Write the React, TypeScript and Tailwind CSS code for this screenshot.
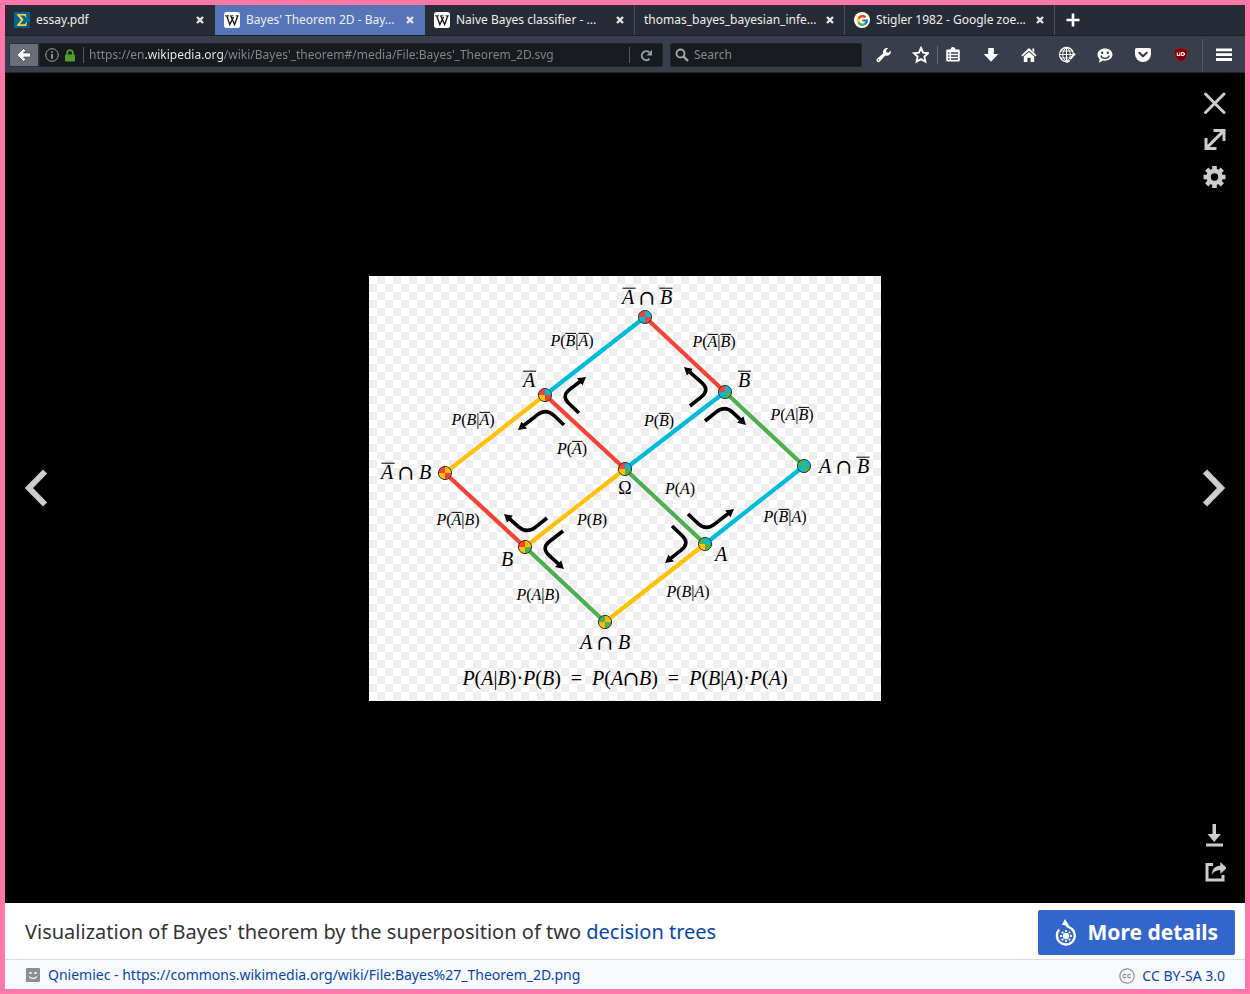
import React from 'react';
import { FcGoogle } from 'react-icons/fc';

const RED = '#f44336';
const CYAN = '#00bcd9';
const YELLOW = '#ffc107';
const GREEN = '#4caf50';

type Point = [number, number];

const points: Record<string, Point> = {
  nAnB: [276, 41],
  nA: [176, 119],
  nB: [356, 116],
  nAB: [76, 197],
  omega: [256, 193],
  AnB: [435, 190],
  B: [156, 271],
  A: [336, 268],
  AB: [236, 346],
};

const edges: [string, string, string][] = [
  ['nA', 'nAnB', CYAN],
  ['nB', 'nAnB', RED],
  ['nA', 'nAB', YELLOW],
  ['nA', 'omega', RED],
  ['nB', 'omega', CYAN],
  ['nB', 'AnB', GREEN],
  ['B', 'nAB', RED],
  ['B', 'omega', YELLOW],
  ['A', 'omega', GREEN],
  ['A', 'AnB', CYAN],
  ['B', 'AB', GREEN],
  ['A', 'AB', YELLOW],
];

// quarter colours: top left, top right, bottom left, bottom right
const quarters: Record<string, string[]> = {
  nAnB: [RED, CYAN, CYAN, RED],
  nA: [RED, CYAN, YELLOW, RED],
  nB: [RED, CYAN, CYAN, GREEN],
  nAB: [RED, YELLOW, YELLOW, RED],
  omega: [RED, CYAN, YELLOW, GREEN],
  AnB: [GREEN, CYAN, CYAN, GREEN],
  B: [RED, YELLOW, YELLOW, GREEN],
  A: [GREEN, CYAN, YELLOW, GREEN],
  AB: [GREEN, YELLOW, YELLOW, GREEN],
};

// start, corner, tip
const turns: [Point, Point, Point][] = [
  [[210, 137], [192, 120], [217, 101]],
  [[195, 149], [177, 132], [149, 154]],
  [[321, 130], [341, 114], [315, 91]],
  [[336, 145], [356, 129], [377, 149]],
  [[178, 242], [158, 258], [135, 238]],
  [[194, 255], [172, 272], [195, 293]],
  [[319, 238], [337, 255], [365, 233]],
  [[303, 250], [321, 267], [296, 287]],
];

// a and b stand for the negated events
const labels: [string, number, number, number][] = [
  ['a ∩ b', 278, 28, 20],
  ['a', 160, 111, 20],
  ['b', 375, 111, 20],
  ['a ∩ B', 37, 203, 20],
  ['A ∩ b', 475, 197, 20],
  ['Ω', 256, 218, 18],
  ['B', 138, 290, 20],
  ['A', 352, 285, 20],
  ['A ∩ B', 236, 373, 20],
  ['P(b|a)', 203, 70, 16],
  ['P(B|a)', 104, 149, 16],
  ['P(a)', 203, 178, 16],
  ['P(a|b)', 345, 71, 16],
  ['P(b)', 290, 150, 16],
  ['P(A|b)', 423, 144, 16],
  ['P(A)', 311, 218, 16],
  ['P(b|A)', 416, 246, 16],
  ['P(B|A)', 319, 321, 16],
  ['P(a|B)', 89, 249, 16],
  ['P(B)', 223, 249, 16],
  ['P(A|B)', 169, 324, 16],
  ['P(A|B)·P(B)\u2002=\u2002P(A∩B)\u2002=\u2002P(B|A)·P(A)', 256, 409, 20],
];

const glyphWidth = (ch: string) => {
  if (/[PABab]/.test(ch)) return 0.611;
  if (/[()]/.test(ch)) return 0.333;
  if (ch === '|') return 0.2;
  if (ch === ' ') return 0.25;
  return 0.732;
};

const MathLabel: React.FC<{ text: string; x: number; y: number; size: number }> = ({ text, x, y, size }) => {
  const chars = [...text];
  const total = chars.reduce((sum, ch) => sum + glyphWidth(ch), 0) * size;
  let pen = x - total / 2;
  const bars: number[] = [];
  chars.forEach((ch) => {
    if (ch === 'a' || ch === 'b') bars.push(pen);
    pen += glyphWidth(ch) * size;
  });
  return (
    <g>
      <text x={x} y={y} fontSize={size} textAnchor="middle" xmlSpace="preserve">
        {text.split(/([PABab]+|∩)/).map((run, i) => (
          <tspan
            key={i}
            fontStyle={i % 2 && run !== '∩' ? 'italic' : 'normal'}
            fontFamily={run === '∩' ? "'DejaVu Math TeX Gyre', 'DejaVu Serif', serif" : undefined}
          >
            {i % 2 ? run.toUpperCase() : run}
          </tspan>
        ))}
      </text>
      {bars.map((bx) => (
        <path key={bx} d={`M${bx} ${y - size * 0.79}h${size * 0.66}`} stroke="#000" strokeWidth="1" />
      ))}
    </g>
  );
};

const along = (from: Point, to: Point, d: number): Point => {
  const len = Math.hypot(to[0] - from[0], to[1] - from[1]);
  return [from[0] + ((to[0] - from[0]) * d) / len, from[1] + ((to[1] - from[1]) * d) / len];
};

const Diagram: React.FC = () => (
  <svg
    viewBox="0 0 512 425"
    className="w-full max-w-[512px] h-auto"
    role="img"
    aria-label="Bayes' theorem decision trees"
    fontFamily="'Liberation Serif', serif"
  >
    <defs>
      <pattern id="checks" width="16" height="16" patternUnits="userSpaceOnUse">
        <rect width="16" height="16" fill="#fff" />
        <path d="M8 0h8v8h-8zM0 8h8v8h-8z" fill="#eee" />
      </pattern>
      <marker id="head" viewBox="0 0 8 10" refX="1" refY="5" markerWidth="8" markerHeight="10" markerUnits="userSpaceOnUse" orient="auto">
        <path d="M0 .5L8 5L0 9.500z" />
      </marker>
    </defs>
    <rect width="512" height="425" fill="url(#checks)" />
    {edges.map(([from, to, color]) => (
      <line
        key={from + to}
        x1={points[from][0]}
        y1={points[from][1]}
        x2={points[to][0]}
        y2={points[to][1]}
        stroke={color}
        strokeWidth="4.200"
      />
    ))}
    {Object.entries(points).map(([id, [x, y]]) => (
      <g key={id} transform={`translate(${x} ${y})`}>
        <path d="M0 0H-6.5A6.5 6.5 0 0 1 0 -6.5z" fill={quarters[id][0]} />
        <path d="M0 0V-6.5A6.5 6.5 0 0 1 6.5 0z" fill={quarters[id][1]} />
        <path d="M0 0V6.5A6.5 6.5 0 0 1 -6.5 0z" fill={quarters[id][2]} />
        <path d="M0 0H6.5A6.5 6.5 0 0 1 0 6.5z" fill={quarters[id][3]} />
        <circle r="6.6" fill="none" stroke="#333" strokeWidth="1" />
      </g>
    ))}
    {turns.map(([start, corner, tip]) => {
      const a = along(corner, start, 11);
      const b = along(corner, tip, 11);
      const end = along(tip, corner, 7);
      return (
        <path
          key={start.join()}
          d={`M${start}L${a}Q${corner} ${b}L${end}`}
          fill="none"
          stroke="#000"
          strokeWidth="3.6"
          markerEnd="url(#head)"
        />
      );
    })}
    {labels.map(([text, x, y, size]) => (
      <MathLabel key={text} text={text} x={x} y={y} size={size} />
    ))}
  </svg>
);

const PdfIcon = () => (
  <svg viewBox="0 0 16 16" className="size-4 shrink-0" aria-hidden="true">
    <rect width="16" height="16" fill="#006699" />
    <path d="M12 10h4v6h-3z" fill="#00527a" />
    <path d="M3 2h9l.4 3.200h-.9C11 3.800 10.400 3.500 9 3.500H6.200L9.600 7.500 6 12.300H9.500c1.500 0 2.200-.6 2.800-2h.9L12.300 14H3v-1L7 8 3 3z" fill="#ffd034" />
  </svg>
);

const WikiIcon = () => (
  <svg viewBox="0 0 16 16" className="size-4 shrink-0" aria-hidden="true">
    <rect width="16" height="16" rx="2.500" fill="#fff" />
    <path d="M1 3.800h4M6 3.800h3.500M11.500 3.800H15" stroke="#111" strokeWidth=".9" />
    <path d="M2.800 4l3 8.500L9.500 5M6.800 4l3.800 8.500L13.700 4" fill="none" stroke="#111" strokeWidth="1.300" />
  </svg>
);

const GoogleIcon = () => (
  <span className="size-4 shrink-0 rounded-full bg-white flex items-center justify-center">
    <FcGoogle size={13} />
  </span>
);

const tabs = [
  { title: 'essay.pdf', icon: <PdfIcon /> },
  { title: "Bayes' Theorem 2D - Bay...", icon: <WikiIcon />, active: true },
  { title: 'Naive Bayes classifier - ...', icon: <WikiIcon /> },
  { title: 'thomas_bayes_bayesian_infe...', icon: null },
  { title: 'Stigler 1982 - Google zoe...', icon: <GoogleIcon /> },
];

const TabBar: React.FC = () => (
  <div role="tablist" className="flex h-[31px] bg-[#272b35] border-b border-[#1d2027] text-[#eeeeec]">
    {tabs.map((tab, i) => (
      <div
        key={tab.title}
        className={`flex items-center w-[210px] min-w-0 pl-[9px] ${
          tab.active ? 'bg-[#5675b9] pr-2.5' : i > 1 ? 'border-r border-[#4a4e58] pr-[9px]' : 'pr-2.5'
        }`}
      >
        <button role="tab" aria-selected={!!tab.active} className="flex flex-1 min-w-0 items-center gap-1.5 text-left">
          {tab.icon}
          <span className="truncate">{tab.title}</span>
        </button>
        <button aria-label="Close tab" className="shrink-0 p-px">
          <svg viewBox="0 0 8 8" className="size-2" aria-hidden="true">
            <path d="M1 1l6 6M7 1L1 7" stroke="#e4e4e0" strokeWidth="2.400" />
          </svg>
        </button>
      </div>
    ))}
    <button aria-label="New tab" className="w-9 flex items-center justify-center">
      <svg viewBox="0 0 14 14" className="size-3.5" aria-hidden="true">
        <path d="M7 .5v13M.5 7h13" stroke="#fff" strokeWidth="2.600" />
      </svg>
    </button>
  </div>
);

const ToolIcon: React.FC<{ label: string; className?: string; children: React.ReactNode }> = ({
  label,
  className = 'w-[38px]',
  children,
}) => (
  <button aria-label={label} className={`shrink-0 h-full flex items-center justify-center ${className}`}>
    <svg viewBox="0 0 18 18" className="size-[18px]" fill="#fff" aria-hidden="true">
      {children}
    </svg>
  </button>
);

const Toolbar: React.FC = () => (
  <div className="flex items-center h-[37px] pl-1 pr-0.5 pt-0.5 bg-[#393e4c] border-b border-[#23262f]">
    <button
      aria-label="Back"
      className="w-[30px] h-6 shrink-0 rounded-l-xs border border-[#2c303a] bg-[#6a6e79] flex items-center justify-center"
    >
      <svg viewBox="0 0 16 16" className="size-4" aria-hidden="true">
        <path d="M1 8l6.500-6.500 2.200 2.200L7.400 6H14.500v4H7.400l2.300 2.300-2.200 2.200z" fill="#fff" stroke="#33363f" strokeWidth=".6" />
      </svg>
    </button>
    <div className="flex flex-1 min-w-0 items-center h-6 rounded-r-xs bg-[#171b1f] border border-[#22262c]">
      <svg viewBox="0 0 14 14" className="size-3.5 shrink-0 ml-[5px]" aria-hidden="true">
        <circle cx="7" cy="7" r="6.300" fill="none" stroke="#a0a0a0" strokeWidth="1" />
        <path d="M6.300 3.200h1.500v1.500H6.300zM6.300 6h1.500v4.800H6.300z" fill="#b5b5b5" />
      </svg>
      <svg viewBox="0 0 10 13" className="w-2.5 h-[13px] shrink-0 ml-1.5" aria-hidden="true">
        <rect y="5.500" width="10" height="7" rx=".8" fill="#4f9e2a" />
        <path d="M2.200 6V4a2.800 2.800 0 0 1 5.600 0V6" fill="none" stroke="#4f9e2a" strokeWidth="1.800" />
      </svg>
      <span className="w-px h-4 ml-2 mr-[5px] shrink-0 bg-[#55585c]" />
      <input
        aria-label="Address"
        defaultValue="https://en.wikipedia.org/wiki/Bayes'_theorem#/media/File:Bayes'_Theorem_2D.svg"
        className="flex-1 min-w-0 text-transparent outline-none bg-clip-text bg-[linear-gradient(90deg,#85888b_55px,#f2f2f2_55px,#f2f2f2_134px,#85888b_134px)]"
      />
      <span className="w-px h-4 shrink-0 bg-[#55585c]" />
      <button aria-label="Reload" className="w-8 shrink-0 flex justify-center">
        <svg viewBox="0 0 13 13" className="size-[13px]" aria-hidden="true">
          <path d="M9.500 9.800A4.500 4.500 0 1 1 9.300 3.300" fill="none" stroke="#93a0aa" strokeWidth="2" />
          <path d="M12 .8v5.700H6.500z" fill="#93a0aa" />
        </svg>
      </button>
    </div>
    <div className="flex items-center w-48 h-6 ml-[7px] mr-[3px] shrink-0 rounded-xs bg-[#171b1f] border border-[#22262c]">
      <svg viewBox="0 0 14 14" className="size-3.5 shrink-0 ml-1" aria-hidden="true">
        <circle cx="5.500" cy="5.500" r="4" fill="none" stroke="#a8a8a8" strokeWidth="1.800" />
        <path d="M8.500 8.500l4.500 4.500" stroke="#a8a8a8" strokeWidth="2.400" />
      </svg>
      <input
        aria-label="Search"
        placeholder="Search"
        className="flex-1 min-w-0 ml-[5px] outline-none text-white placeholder:text-[#85888b]"
      />
    </div>
    <ToolIcon label="Tools">
      <path d="M15.800 4.600l-2.300 2.200-2-.5-.5-2 2.300-2.200a4.200 4.200 0 0 0-5.200 5.300L2 12.700a1.900 1.900 0 0 0 2.800 2.800l5.500-6a4.200 4.200 0 0 0 5.500-4.900z" />
      <circle cx="3.500" cy="14" r=".7" fill="#393e4c" />
    </ToolIcon>
    <ToolIcon label="Bookmark" className="w-[34px]">
      <path
        d="M10 2l2.100 4.600 5 .6-3.700 3.400 1 5L10 13.100l-4.400 2.500 1-5L2.900 7.200l5-.6z"
        fill="none"
        stroke="#fff"
        strokeWidth="1.900"
      />
    </ToolIcon>
    <span className="w-px h-[18px] shrink-0 bg-[#666a75]" />
    <ToolIcon label="Bookmarks list" className="w-[30px] mr-1">
      <path d="M3.500 3.500h3a2.500 2.500 0 0 1 5 0h3a1.300 1.300 0 0 1 1.300 1.300v9.400a1.300 1.300 0 0 1-1.300 1.300h-11a1.300 1.300 0 0 1-1.300-1.300V4.800a1.300 1.300 0 0 1 1.300-1.300z" />
      <path d="M4 7h1.500M7 7h7M4 10h1.500M7 10h7M4 13h1.500M7 13h7" stroke="#393e4c" strokeWidth="1.500" />
    </ToolIcon>
    <ToolIcon label="Downloads">
      <path d="M6.200 2h5.600v6h4.500L9 15.800 1.700 8h4.500z" />
    </ToolIcon>
    <ToolIcon label="Home">
      <path d="M9 2l7.700 7.200-1.300 1.300L9 4.800l-6.400 5.700-1.300-1.300z" />
      <path d="M9 6l5.200 4.600v5.400h-3.600v-4.200H7.400V16H3.800v-5.400z" />
      <path d="M12.400 2.500h1.800v4l-1.800-1.700z" />
    </ToolIcon>
    <ToolIcon label="Translate">
      <circle cx="8.500" cy="8.500" r="7" fill="none" stroke="#fff" strokeWidth="1.300" />
      <path
        d="M8.500 1.500v14M1.500 8.500h14M2.500 5h12M2.500 12h8M8.500 1.500c-5 4-5 10 0 14M8.500 1.500c4 3.500 4.300 7 3 11"
        fill="none"
        stroke="#fff"
        strokeWidth="1"
      />
      <path d="M18 6.500L7 17.500h11z" fill="#393e4c" />
      <path d="M16.500 7l1.200 1.200-4.900 5.600-1.800-1.500zM10.200 13l2 1.700c-1 1.900-2.800 2.300-4.700 2 1.500-.8 1.300-2.700 2.700-3.700z" />
    </ToolIcon>
    <ToolIcon label="Chat">
      <path d="M9 2.500c4.300 0 7.500 2.600 7.500 6.100s-3.200 6.100-7.500 6.100c-.7 0-1.400 0-2-.2L3 16.800l.7-3.600C2.300 12 1.500 10.400 1.500 8.600c0-3.500 3.200-6.100 7.500-6.100z" />
      <circle cx="6.200" cy="6.800" r="1.200" fill="#393e4c" />
      <circle cx="11.800" cy="6.800" r="1.200" fill="#393e4c" />
      <path d="M4.800 9.500a4.300 3.600 0 0 0 8.400 0" fill="none" stroke="#393e4c" strokeWidth="1.300" />
    </ToolIcon>
    <ToolIcon label="Pocket">
      <path d="M2.500 2h13A1.500 1.500 0 0 1 17 3.500V8a8 8 0 0 1-16 0V3.500A1.500 1.500 0 0 1 2.500 2z" />
      <path d="M5.300 6.800L9 10.300l3.700-3.500" fill="none" stroke="#393e4c" strokeWidth="2.200" strokeLinecap="round" strokeLinejoin="round" />
    </ToolIcon>
    <ToolIcon label="uBlock Origin">
      <path d="M9 1.500c2 1.200 4 1.800 6.500 1.800 0 6.500-.5 9-6.500 12.700C3 12.300 2.500 9.800 2.500 3.300 5 3.300 7 2.700 9 1.500z" fill="#800000" stroke="#a33" strokeWidth=".5" />
      <path d="M5.300 6.500v3h2.500v-3M9.700 6.500h1.500l1.300 1v1l-1.300 1H9.700z" fill="none" stroke="#fff" strokeWidth="1.100" />
    </ToolIcon>
    <span className="w-px h-8 shrink-0 mx-0.5 bg-[#555a66]" />
    <ToolIcon label="Menu">
      <path d="M1 2.500h16v2.800H1zM1 7.300h16v2.800H1zM1 12.100h16v2.800H1z" />
    </ToolIcon>
  </div>
);

const ViewerButton: React.FC<{ label: string; children: React.ReactNode }> = ({ label, children }) => (
  <button aria-label={label} className="size-6">
    <svg viewBox="0 0 24 24" className="size-6" fill="#ccc" aria-hidden="true">
      {children}
    </svg>
  </button>
);

const Chevron: React.FC<{ label: string; d: string }> = ({ label, d }) => (
  <button aria-label={label}>
    <svg viewBox="0 0 24 38" className="w-6 h-[38px]" fill="none" stroke="#ccc" strokeWidth="6" aria-hidden="true">
      <path d={d} />
    </svg>
  </button>
);

const Viewer: React.FC = () => (
  <main className="flex-1 grid grid-cols-[1fr_minmax(0,512px)_1fr] bg-black">
    <div className="flex items-center pl-[19px]">
      <Chevron label="Previous" d="M21 2.500L5 19l16 16.500" />
    </div>
    <div className="flex items-center">
      <Diagram />
    </div>
    <div className="grid grid-rows-[1fr_auto_1fr] justify-items-end pr-[19px]">
      <div className="flex flex-col gap-[13px] pt-[18px]">
        <ViewerButton label="Close">
          <path d="M3.500 3L22 21.500M22 3L3.500 21.500" stroke="#ccc" strokeWidth="3" strokeLinecap="round" />
        </ViewerButton>
        <ViewerButton label="Full screen">
          <path d="M11.500 1h12v12h-3V6.200L7.700 19h6.800v3h-12V10h3v6.800L18.300 4h-6.800z" />
        </ViewerButton>
        <ViewerButton label="Settings">
          <circle cx="12.500" cy="12" r="6" fill="none" stroke="#ccc" strokeWidth="4.600" />
          <path
            d="M12.500 1v4M12.500 19v4M1.500 12h4M19.500 12h4M4.700 4.200l2.900 2.900M17.400 16.900l2.900 2.900M4.700 19.800l2.900-2.900M17.400 7.100l2.900-2.900"
            stroke="#ccc"
            strokeWidth="4.600"
          />
        </ViewerButton>
      </div>
      <Chevron label="Next" d="M3 2.500L19 19 3 35.500" />
      <div className="flex flex-col justify-end gap-[13px] pb-[19px]">
        <ViewerButton label="Download">
          <path d="M10.500 1h3.500v10h5l-6.800 8L5.500 11h5zM4 20.500h17v3H4z" />
        </ViewerButton>
        <ViewerButton label="Share">
          <path d="M11 4.500H5v15.500h16V15" fill="none" stroke="#ccc" strokeWidth="3" />
          <path d="M18 1.500L25 8l-7 6.500v-4c-4 0-6.500 1.500-8.500 5C9.500 9.500 12.500 5.800 18 5.500z" stroke="#000" strokeWidth=".6" />
        </ViewerButton>
      </div>
    </div>
  </main>
);

const CommonsIcon = () => (
  <svg viewBox="0 0 22 28" className="w-[22px] h-7" aria-hidden="true">
    <path d="M4.200 10.500A9 9 0 1 0 17 10C13.500 7.500 11 7.500 10.500 4" fill="none" stroke="#fff" strokeWidth="2.400" />
    <path d="M10 0l3.800 6H6.800z" fill="#fff" />
    <circle cx="11" cy="17" r="3.200" fill="#fff" />
    <path
      d="M11 11v2M11 21v2M5 17h2M15 17h2M6.800 12.800l1.400 1.400M13.800 19.800l1.400 1.400M6.800 21.200l1.400-1.400M13.800 14.200l1.400-1.400"
      stroke="#fff"
      strokeWidth="1.800"
    />
  </svg>
);

const Footer: React.FC = () => (
  <footer className="bg-white">
    <div className="flex items-center justify-between gap-4 pl-5 pr-2.5 pt-[7px] pb-1 text-xl">
      <p className="pb-0.5 text-[#333]">
        Visualization of Bayes' theorem by the superposition of two{' '}
        <a href="#decision-trees" className="text-[#0645ad]">
          decision trees
        </a>
      </p>
      <button className="flex shrink-0 items-center gap-[11px] h-[45px] px-[17px] rounded-xs bg-[#36c] text-white text-[21px] font-bold">
        <CommonsIcon />
        More details
      </button>
    </div>
    <div className="flex items-center justify-between h-[30px] pl-[21px] pr-5 border-t border-[#ddd] bg-[#f8f9fb] text-sm text-[#0645ad]">
      <div className="flex items-center gap-2">
        <svg viewBox="0 0 14 14" className="size-3.5" aria-hidden="true">
          <rect width="14" height="14" rx="1" fill="#8e8f91" />
          <path d="M3.500 4h2v2h-2zM8.500 4h2v2h-2z" fill="#fff" />
          <path d="M3.200 8.500c1.500 2.600 6.100 2.600 7.600 0" fill="none" stroke="#fff" strokeWidth="1.300" />
        </svg>
        <a href="#author">Qniemiec - https://commons.wikimedia.org/wiki/File:Bayes%27_Theorem_2D.png</a>
      </div>
      <div className="flex items-center gap-[7px] pt-0.5">
        <svg viewBox="0 0 16 16" className="size-4" fill="none" stroke="#8e8f91" aria-hidden="true">
          <circle cx="8" cy="8" r="7.200" strokeWidth="1.200" />
          <path d="M7 6.900a1.700 1.700 0 1 0 0 2.200M11.700 6.900a1.700 1.700 0 1 0 0 2.200" strokeWidth="1.200" />
        </svg>
        <a href="#license">CC BY-SA 3.0</a>
      </div>
    </div>
  </footer>
);

const App: React.FC = () => (
  <div className="flex flex-col min-h-screen border-[5px] border-[#ff78a8] font-['Noto_Sans',sans-serif] text-xs">
    <TabBar />
    <Toolbar />
    <Viewer />
    <Footer />
  </div>
);

export default App;
